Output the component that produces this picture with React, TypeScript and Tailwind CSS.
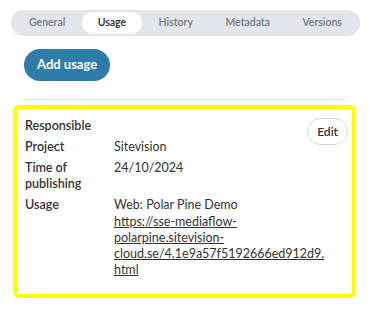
const tabs = ['General', 'Usage', 'History', 'Metadata', 'Versions'];

function Row({ label, children }: { label: string; children?: React.ReactNode }) {
  return (
    <div className="flex">
      <div className="w-[89px] shrink-0 font-semibold">{label}</div>
      <div className="w-[214px] shrink-0">{children}</div>
    </div>
  );
}

export default function App() {
  return (
    <div
      className="h-[328px] w-[369px] bg-white text-[#333]"
      style={{ fontFamily: 'Lato, "Noto Sans", sans-serif' }}
    >
      <div className="pl-[11px] pr-[9px] pt-[10px]">
        <div className="flex h-[26px] items-center justify-between rounded-full bg-[#e4e5ea] px-[2px]">
          {tabs.map(tab => (
            <div
              key={tab}
              className={
                tab === 'Usage'
                  ? 'flex h-[22px] items-center rounded-full bg-white px-[16px] text-[10.5px] font-semibold text-[#222]'
                  : 'flex h-[22px] items-center px-[16px] text-[10.5px] font-semibold text-[#737680]'
              }
            >
              {tab}
            </div>
          ))}
        </div>
      </div>

      <div className="px-[24px] pt-[13px] pr-[23px]">
        <button className="h-[32px] rounded-full bg-[#2f7ba9] px-[13px] text-[13px] font-bold text-white">
          Add usage
        </button>
        <div className="mt-[18px] h-px bg-[#e3e3e6]" />
      </div>

      <div className="mx-[13px] mt-[5px] rounded-[6px] border-4 border-[#ffff00] pb-[16px] pl-[8px] pr-[4px] pt-[9px] text-[12.5px] leading-[16px]">
        <div className="flex flex-col gap-[5px]">
          <div className="flex h-[16px]">
            <div className="font-semibold">Responsible</div>
            <button className="ml-auto h-[27px] shrink-0 rounded-full border border-[#d6d6d8] px-[9px] text-[12px] font-semibold text-[#333]">
              Edit
            </button>
          </div>
          <Row label="Project">Sitevision</Row>
          <Row label="Time of publishing">24/10/2024</Row>
          <Row label="Usage">
            <div>Web: Polar Pine Demo</div>
            <a href="#" className="mt-[1px] block break-words underline">
              https://sse-mediaflow-polarpine.sitevision-cloud.se/4.1e9a57f5192666ed912d9.html
            </a>
          </Row>
        </div>
      </div>
    </div>
  );
}
